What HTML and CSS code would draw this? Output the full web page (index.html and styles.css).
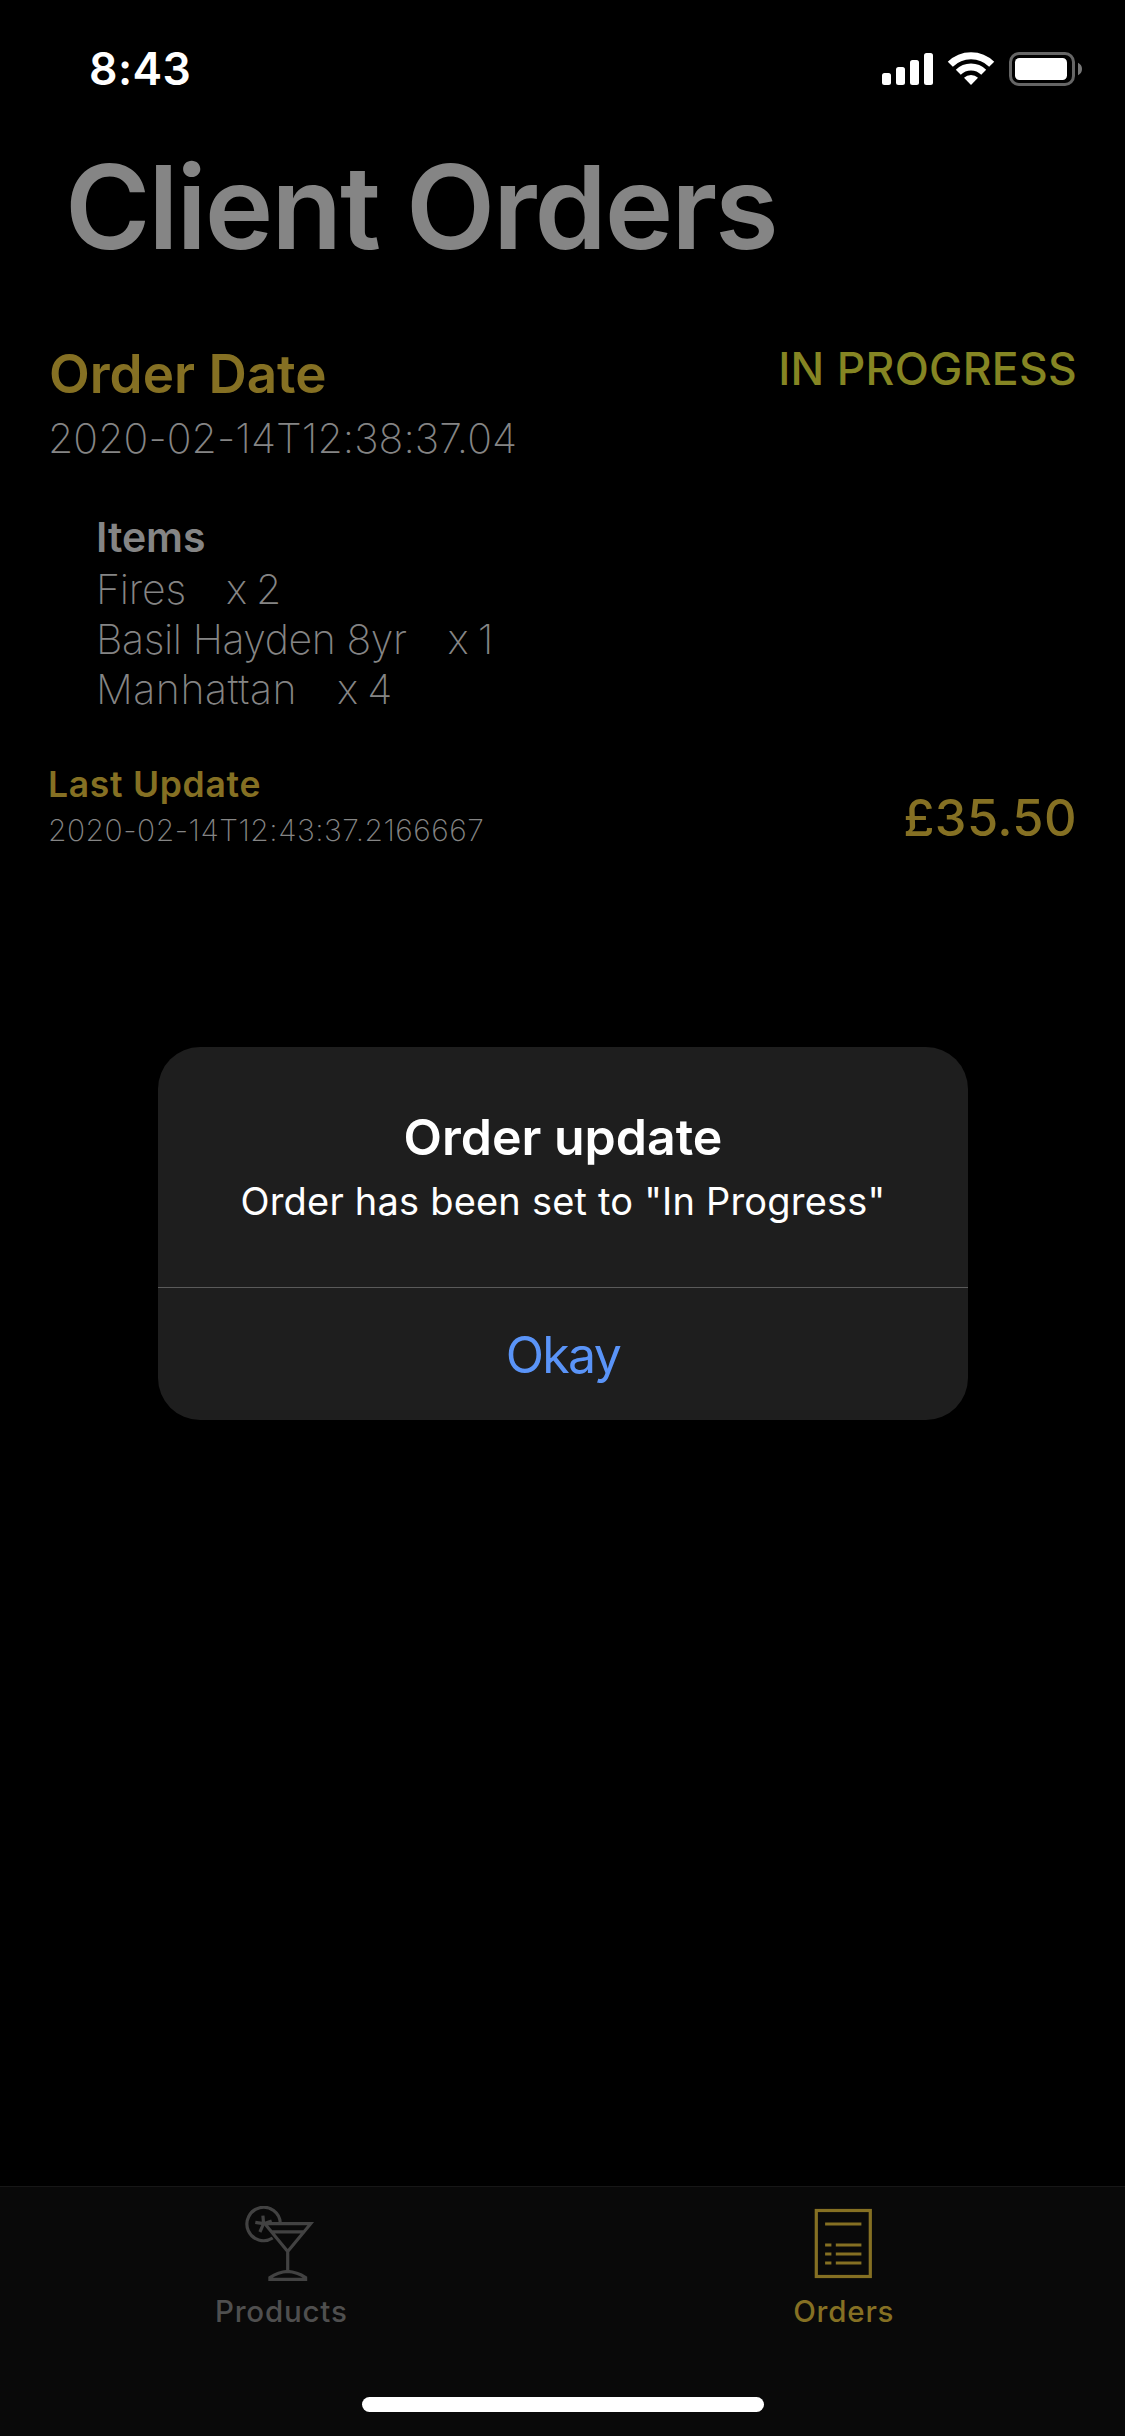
FILE: index.html
```html
<!DOCTYPE html>
<html lang="en">
<head>
<meta charset="utf-8">
<title>Client Orders</title>
<link rel="stylesheet" href="styles.css">
</head>
<body>
<div class="screen">
  <header class="status-bar">
    <span class="clock">8:43</span>
    <svg class="indicators" width="200" height="34" viewBox="0 0 200 34" fill="#fff">
      <rect x="0" y="21" width="9" height="12" rx="2.5"/>
      <rect x="14" y="15" width="9" height="18" rx="2.5"/>
      <rect x="28" y="8" width="9" height="25" rx="2.5"/>
      <rect x="42" y="1" width="9" height="32" rx="2.5"/>
      <path d="M68.3 12.3a29.3 29.3 0 0 1 41.4 0" fill="none" stroke="#fff" stroke-width="7.2"/>
      <path d="M76.3 20.3a18 18 0 0 1 25.4 0" fill="none" stroke="#fff" stroke-width="7"/>
      <path d="M89 33l-7-7.2a10 10 0 0 1 14 0z"/>
      <rect x="128.5" y="1.5" width="63" height="31" rx="8.5" fill="none" stroke="#666" stroke-width="3"/>
      <rect x="133" y="6" width="52" height="22" rx="4.5"/>
      <path d="M196 10.8q4 2 4 6.2t-4 6.2z" fill="#777"/>
    </svg>
  </header>

  <main class="content">
    <h1 class="title">Client Orders</h1>
    <article class="order">
      <div class="order-head">
        <div>
          <h2 class="order-label">Order Date</h2>
          <p class="order-date">2020-02-14T12:38:37.04</p>
        </div>
        <span class="order-status">IN PROGRESS</span>
      </div>
      <section class="items">
        <h3 class="items-label">Items</h3>
        <div class="item"><span class="name-fires">Fires</span><span class="qty">x 2</span></div>
        <div class="item"><span class="name-basil">Basil Hayden 8yr</span><span class="qty">x 1</span></div>
        <div class="item"><span class="name-manhattan">Manhattan</span><span class="qty">x 4</span></div>
      </section>
      <div class="order-foot">
        <div>
          <h3 class="update-label">Last Update</h3>
          <p class="update-date">2020-02-14T12:43:37.2166667</p>
        </div>
        <span class="price">£35.50</span>
      </div>
    </article>
  </main>

  <nav class="tab-bar">
    <a class="tab">
      <svg width="75" height="75" viewBox="0 0 75 75" fill="none" stroke="currentColor" stroke-width="3.2">
        <path d="M36.3 17A16.7 16.7 0 1 0 28.7 32"/>
        <path d="M19.6 17.7L18.9 9.7M19.6 17.7L27.7 15M19.6 17.7L11.3 16.3M19.6 17.7L15.9 26"/>
        <path d="M20.8 17.7H66.7L43.7 45.6zM27 25.8H61M43.7 46V65.5"/>
        <path d="M25.9 73.4v-1.8Q34 66 43.7 65.4 53 66 61.6 71.6v1.8z"/>
      </svg>
      <span class="tab-label">Products</span>
    </a>
    <a class="tab tab-active">
      <svg width="75" height="75" viewBox="0 0 75 75" fill="none" stroke="currentColor" stroke-width="3.2">
        <rect x="10.3" y="4.5" width="54" height="66"/>
        <path d="M19.1 18H55.4M19.1 39h6.3M29.8 39H55.4M19.1 48h6.3M29.8 48H55.4M19.1 57h6.3M29.8 57H55.4"/>
      </svg>
      <span class="tab-label">Orders</span>
    </a>
    <div class="home-indicator"></div>
  </nav>

  <div class="dialog" role="alertdialog">
    <div class="dialog-body">
      <h2 class="dialog-title">Order update</h2>
      <p class="dialog-message">Order has been set to "In Progress"</p>
    </div>
    <div class="dialog-button">Okay</div>
  </div>
</div>
</body>
</html>
```
FILE: styles.css
```css
* { box-sizing: border-box; margin: 0; padding: 0; }

body {
  background: #000;
  font-family: Inter, "Liberation Sans", sans-serif;
  color: #858585;
}

.screen {
  position: relative;
  display: flex;
  flex-direction: column;
  width: 1125px;
  height: 2436px;
  overflow: hidden;
}

/* Status bar */
.status-bar {
  display: flex;
  justify-content: space-between;
  align-items: flex-start;
  height: 137px;
  padding: 42px 43px 0 89px;
}
.clock { font-size: 44.5px; line-height: 54px; font-weight: 600; letter-spacing: 0.4px; color: #fff; }
.indicators { display: block; margin-top: 10px; }

/* Orders list */
.content { flex: 1; }
.title {
  padding-left: 65px;
  font-size: 116px;
  line-height: 140px;
  font-weight: 600;
  letter-spacing: -2.13px;
}
.order { padding: 65px 48px 0; }
.order-head { display: flex; justify-content: space-between; align-items: flex-start; }
.order-label {
  margin-left: 1px;
  font-size: 53px;
  line-height: 65px;
  font-weight: 600;
  letter-spacing: 0;
  color: #857023;
}
.order-date { margin-top: 6px; font-size: 41px; line-height: 50px; font-weight: 180; letter-spacing: 0.06px; }
.order-status { font-size: 44.5px; line-height: 54px; font-weight: 550; letter-spacing: 0.3px; color: #858523; }

.items { margin-top: 49px; padding-left: 48px; font-size: 41px; line-height: 50px; font-weight: 180; }
.items-label { margin: 0 0 2px; font-size: 41px; font-weight: 600; letter-spacing: -0.05px; }
.item { display: flex; gap: 40px; }
.name-fires { letter-spacing: -0.2px; }
.name-basil { margin-right: 1px; letter-spacing: -0.41px; }
.name-manhattan { letter-spacing: 0.5px; }
.qty { letter-spacing: -0.5px; word-spacing: -1.5px; }

.order-foot { display: flex; justify-content: space-between; align-items: flex-end; margin-top: 50px; }
.update-label { font-size: 35.5px; line-height: 42px; font-weight: 600; letter-spacing: 0.7px; color: #857023; }
.update-date { margin-top: 6px; font-size: 30px; line-height: 36px; font-weight: 180; letter-spacing: 0.48px; }
.price { font-size: 50.5px; line-height: 60px; font-weight: 550; letter-spacing: 0.4px; color: #857023; }

/* Tab bar */
.tab-bar {
  position: relative;
  display: flex;
  height: 250px;
  padding-top: 19px;
  border-top: 1px solid #171717;
  background: #090909;
}
.tab { flex: 1; display: flex; flex-direction: column; align-items: center; gap: 12px; color: #424242; }
.tab-label { font-size: 29.5px; line-height: 36px; font-weight: 500; letter-spacing: 0.8px; color: #4f4f4f; }
.tab-active, .tab-active .tab-label { color: #857023; }
.home-indicator {
  position: absolute;
  left: 362px;
  bottom: 24px;
  width: 402px;
  height: 15px;
  border-radius: 8px;
  background: #fff;
}

/* Alert over the screen */
.dialog {
  position: absolute;
  left: 158px;
  top: 1047px;
  width: 810px;
  height: 373px;
  border-radius: 42px;
  background: #1e1e1e;
  color: #fff;
  text-align: center;
}
.dialog-body { height: 241px; padding-top: 60px; border-bottom: 1px solid #5a5a5a; }
.dialog-title { font-size: 50px; line-height: 60px; font-weight: 600; letter-spacing: 0; }
.dialog-message { margin-top: 11px; font-size: 38px; line-height: 46px; letter-spacing: 0.2px; }
.dialog-button { font-size: 50px; line-height: 134px; letter-spacing: -1.6px; color: #5a94f8; }
```
